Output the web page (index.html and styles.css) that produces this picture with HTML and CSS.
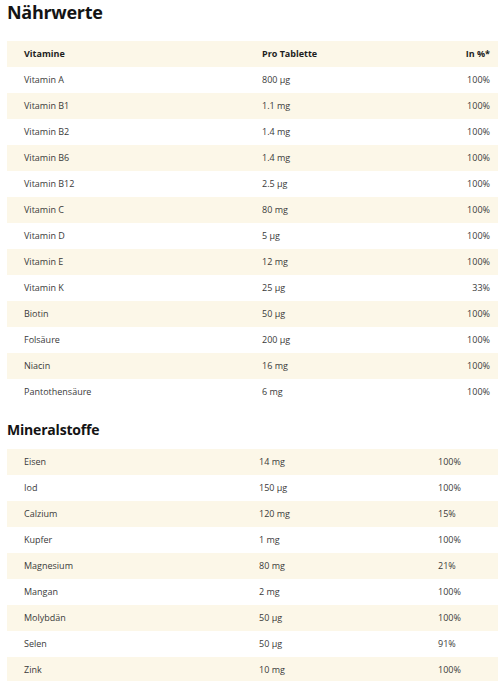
FILE: index.html
```html
<!DOCTYPE html>
<html lang="de">
<head>
<meta charset="utf-8">
<title>Nährwerte</title>
<link rel="stylesheet" href="styles.css">
</head>
<body>
<div class="page">
  <h1 class="title">Nährwerte</h1>
  <div class="table vit">
    <div class="row head"><span>Vitamine</span><span>Pro Tablette</span><span class="r">In %*</span></div>
    <div class="row"><span>Vitamin A</span><span>800 µg</span><span class="r">100%</span></div>
    <div class="row"><span>Vitamin B1</span><span>1.1 mg</span><span class="r">100%</span></div>
    <div class="row"><span>Vitamin B2</span><span>1.4 mg</span><span class="r">100%</span></div>
    <div class="row"><span>Vitamin B6</span><span>1.4 mg</span><span class="r">100%</span></div>
    <div class="row"><span>Vitamin B12</span><span>2.5 µg</span><span class="r">100%</span></div>
    <div class="row"><span>Vitamin C</span><span>80 mg</span><span class="r">100%</span></div>
    <div class="row"><span>Vitamin D</span><span>5 µg</span><span class="r">100%</span></div>
    <div class="row"><span>Vitamin E</span><span>12 mg</span><span class="r">100%</span></div>
    <div class="row"><span>Vitamin K</span><span>25 µg</span><span class="r">33%</span></div>
    <div class="row"><span>Biotin</span><span>50 µg</span><span class="r">100%</span></div>
    <div class="row"><span>Folsäure</span><span>200 µg</span><span class="r">100%</span></div>
    <div class="row"><span>Niacin</span><span>16 mg</span><span class="r">100%</span></div>
    <div class="row"><span>Pantothensäure</span><span>6 mg</span><span class="r">100%</span></div>
  </div>
  <h2 class="subtitle">Mineralstoffe</h2>
  <div class="table min">
    <div class="row"><span>Eisen</span><span>14 mg</span><span>100%</span></div>
    <div class="row"><span>Iod</span><span>150 µg</span><span>100%</span></div>
    <div class="row"><span>Calzium</span><span>120 mg</span><span>15%</span></div>
    <div class="row"><span>Kupfer</span><span>1 mg</span><span>100%</span></div>
    <div class="row"><span>Magnesium</span><span>80 mg</span><span>21%</span></div>
    <div class="row"><span>Mangan</span><span>2 mg</span><span>100%</span></div>
    <div class="row"><span>Molybdän</span><span>50 µg</span><span>100%</span></div>
    <div class="row"><span>Selen</span><span>50 µg</span><span>91%</span></div>
    <div class="row"><span>Zink</span><span>10 mg</span><span>100%</span></div>
  </div>
</div>
</body>
</html>
```

FILE: styles.css
```css
html, body {
  margin: 0;
  padding: 0;
  background: #ffffff;
}
.page {
  padding: 0 0 0 7px;
  font-family: "Open Sans", "Noto Sans", sans-serif;
  color: #3a3a3a;
}
.title {
  margin: 0;
  height: 41px;
  line-height: 24px;
  font-size: 18px;
  font-weight: 700;
  color: #141414;
  letter-spacing: -0.3px;
}
.subtitle {
  margin: 0;
  height: 44px;
  line-height: 50px;
  font-size: 14px;
  font-weight: 700;
  color: #141414;
  letter-spacing: -0.2px;
}
.table {
  display: flex;
  flex-direction: column;
}
.row {
  display: grid;
  height: 26px;
  line-height: 26px;
  font-size: 9px;
  padding: 0 8px 0 17px;
}
.vit .row {
  grid-template-columns: 238px 1fr 60px;
}
.min .row {
  grid-template-columns: 235px 179px 1fr;
}
.vit .row:nth-child(odd) {
  background: #fcf7e8;
}
.min .row:nth-child(odd) {
  background: #fcf7e8;
}
.head {
  font-weight: 700;
  color: #1e1e1e;
}
.r {
  text-align: right;
}
```
